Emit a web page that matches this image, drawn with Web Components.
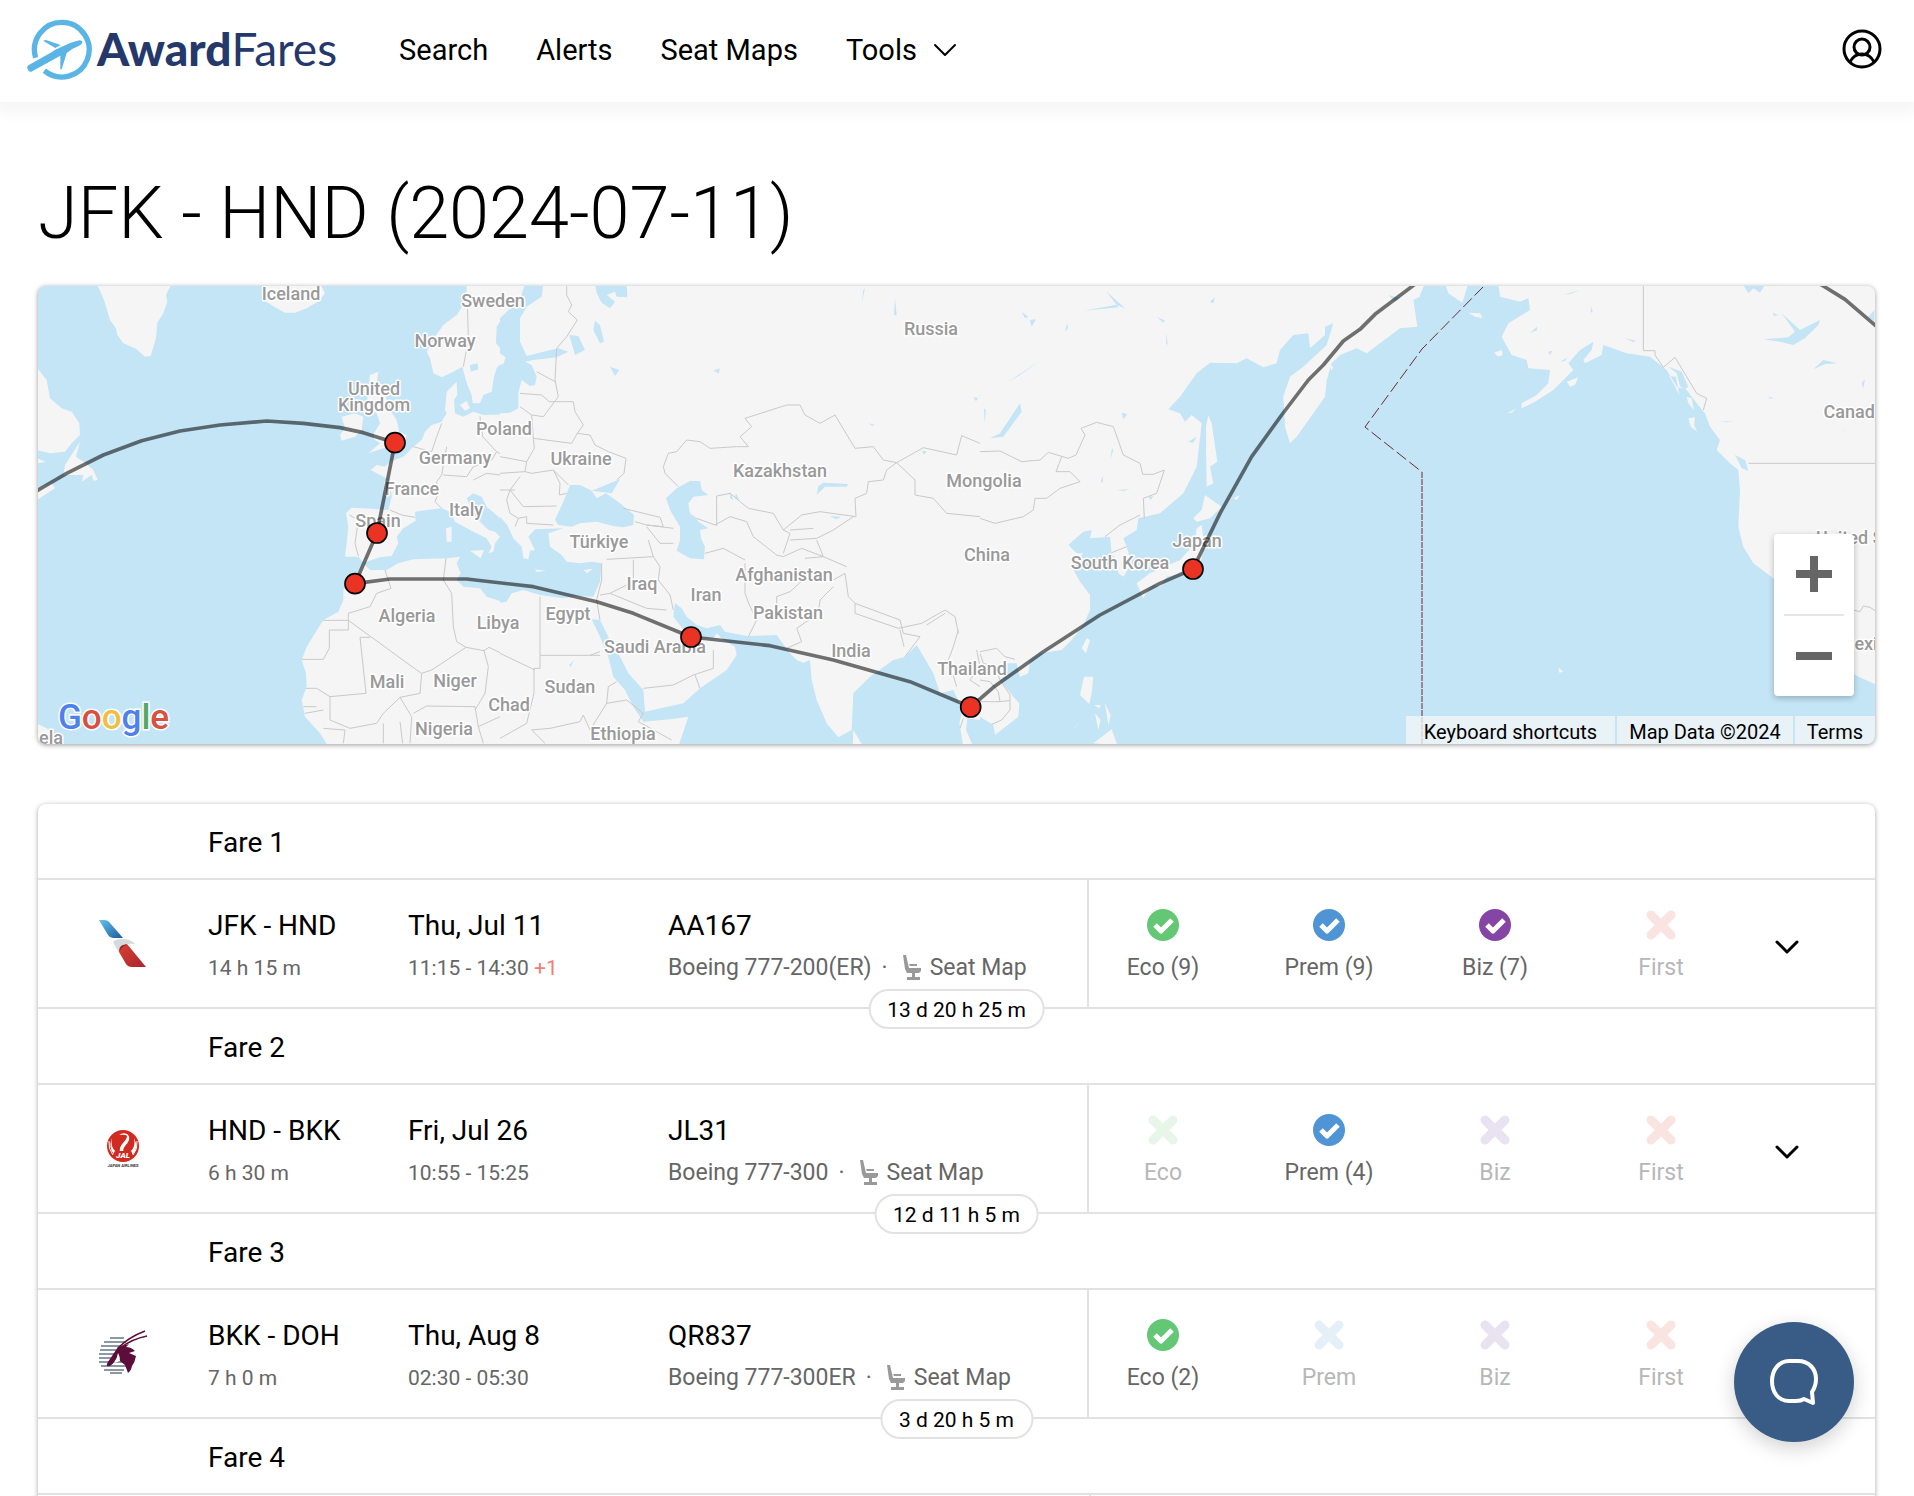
<!DOCTYPE html>
<html lang="en">
<head>
<meta charset="utf-8">
<meta name="viewport" content="width=device-width, initial-scale=1">
<title>AwardFares – JFK - HND</title>
<style>
  html, body { margin: 0; height: 100%; background: #fff; }
  body { font-family: Roboto, "Liberation Sans", sans-serif; color: #000; }
</style>
</head>
<body>
<af-app>
  <af-header slot="header"></af-header>
  <af-route-map></af-route-map>
  <af-fare-list>
    <af-fare name="Fare 1">
      <af-flight airline="aa" route="JFK - HND" duration="14 h 15 m" date="Thu, Jul 11" time="11:15 - 14:30" plus="+1" number="AA167" aircraft="Boeing 777-200(ER)" eco="9" prem="9" biz="7" layover="13 d 20 h 25 m"></af-flight>
    </af-fare>
    <af-fare name="Fare 2">
      <af-flight airline="jl" route="HND - BKK" duration="6 h 30 m" date="Fri, Jul 26" time="10:55 - 15:25" number="JL31" aircraft="Boeing 777-300" prem="4" layover="12 d 11 h 5 m"></af-flight>
    </af-fare>
    <af-fare name="Fare 3">
      <af-flight airline="qr" route="BKK - DOH" duration="7 h 0 m" date="Thu, Aug 8" time="02:30 - 05:30" number="QR837" aircraft="Boeing 777-300ER" eco="2" layover="3 d 20 h 5 m"></af-flight>
    </af-fare>
    <af-fare name="Fare 4"></af-fare>
  </af-fare-list>
  <af-chat slot="floating"></af-chat>
</af-app>

<script>
const define = (name, render) => customElements.define(name, class extends HTMLElement {
  connectedCallback() {
    if (this.shadowRoot) return;
    this.attachShadow({ mode: 'open' }).innerHTML = render(this);
  }
});

define('af-app', () => `
<style>
  :host { display: flex; flex-direction: column; height: 100vh; overflow-y: auto; scrollbar-width: none; }
  main { flex: none; display: flex; flex-direction: column; padding: 64px 39px 40px 38px; }
  h1 { margin: 0 0 24px; font-size: 72px; line-height: 96px; font-weight: 300; }
  .stack { display: flex; flex-direction: column; gap: 60px; }
</style>
<slot name="header"></slot>
<main><h1>JFK - HND (2024-07-11)</h1><div class="stack"><slot></slot></div></main>
<slot name="floating"></slot>`);

define('af-logo', () => `
<style>
  :host { display: block; }
  a { display: flex; align-items: center; gap: 4px; color: #24386b; text-decoration: none; font: 400 46px/60px Lato, sans-serif; }
  b { font-weight: 900; }
  svg { display: block; width: 67px; height: 63px; }
</style>
<a href="#home"><svg viewBox="14 19 201 189" aria-hidden="true">
  <g fill="none" stroke="#5ab5e6">
    <path d="M43 138A82 82 0 1 1 69 177" stroke-width="16"/>
  </g>
  <path fill="#5ab5e6" d="M18 170Q16 163 24 159L92 121 100 115 148 93 174 86Q184 86 183 94 176 103 154 111L136 124 122 170Q121 175 117 173L117 132 30 180Q22 182 18 170ZM65 87L74 85 118 100 102 109Z"/>
</svg><span><b>Award</b>Fares</span></a>`);

define('af-header', () => `
<style>
  :host { flex: none; display: block; background: #fff; box-shadow: 0 8px 12px 4px rgba(0,0,0,.035); }
  header { display: flex; align-items: center; height: 98px; padding: 0 32px 4px 26px; }
  nav { display: flex; align-items: center; gap: 48px; margin-left: 62px; padding-top: 2px; font-size: 29px; line-height: 40px; }
  nav a { color: #000; text-decoration: none; }
  button { display: flex; align-items: center; gap: 16px; border: 0; padding: 0; background: none; font: inherit; color: #000; }
  .user { margin-left: auto; }
  svg { display: block; fill: none; stroke: #000; }
</style>
<header>
  <af-logo></af-logo>
  <nav aria-label="Main">
    <a href="#search">Search</a><a href="#alerts">Alerts</a><a href="#seats">Seat Maps</a>
    <button type="button">Tools <svg width="24" height="14" viewBox="0 0 24 14" stroke-width="2" stroke-linecap="round" stroke-linejoin="round"><path d="M2 2l10 10L22 2"/></svg></button>
  </nav>
  <button class="user" type="button" aria-label="Account"><svg width="40" height="40" viewBox="0 0 40 40" stroke-width="3"><circle cx="20" cy="20" r="18"/><circle cx="20" cy="18" r="8"/><path d="M8 33Q12 25 20 25T32 33"/></svg></button>
</header>`);

/* Place names: text, centre x, centre y. */
const places = [['Iceland',291,294],['Sweden',493,301],['Norway',445,341],['United',374,389],['Kingdom',374,405],['Poland',504,429],['Germany',455,458],['France',412,489],['Italy',466,510],['Spain',378,521],['Ukraine',581,459],['Türkiye',599,542],['Kazakhstan',780,471],['Russia',931,329],['Mongolia',984,481],['China',987,555],['Iraq',642,584],['Iran',706,595],['Afghanistan',784,575],['Pakistan',788,613],['Egypt',568,614],['Saudi Arabia',655,647],['India',851,651],['Thailand',972,669],['Sudan',570,687],['Ethiopia',623,734],['Algeria',407,616],['Libya',498,623],['Mali',387,682],['Niger',455,681],['Chad',509,705],['Nigeria',444,729],['ela',51,738],['South Korea',1120,563],['Japan',1197,541],['Canada',1854,412],['United States',1870,538],['Mexico',1868,644]];
const stops = [[1095,488],[1041,759],[975,911],[1983,1071],[2822,1281],[3489,867]];

define('af-route-map', () => `
<style>
  :host { display: block; position: relative; height: 458px; border-radius: 8px; box-shadow: 0 1px 5px rgba(0,0,0,.4); overflow: hidden; background: #c3e5f6; }
  .map { display: block; width: 100%; height: 100%; }
  .land { fill: #f5f5f5; } .sea { fill: #c3e5f6; }
  .border { fill: none; stroke: #c9c9c9; stroke-width: 3; stroke-linejoin: round; }
  .names { font-size: 18px; font-weight: 500; text-anchor: middle; fill: #999; stroke: #fff; stroke-width: 3px; stroke-linejoin: round; paint-order: stroke; }
  .brand { font-size: 35px; font-weight: 500; stroke: #fff; stroke-width: 3px; paint-order: stroke; }
  .zoom { position: absolute; right: 21px; bottom: 48px; width: 80px; box-sizing: border-box; padding: 0 10px; background: #fff; border-radius: 4px; box-shadow: 0 2px 6px rgba(0,0,0,.25); }
  .zoom button { display: flex; width: 100%; height: 80px; align-items: center; justify-content: center; border: 0; padding: 0; background: none; }
  .zoom button + button { border-top: 2px solid #e6e6e6; height: 82px; }
  .legal { position: absolute; right: 0; bottom: 0; display: flex; gap: 2px; font-size: 20px; line-height: 24px; }
  .legal > * { border: 0; margin: 0; padding: 4px 12px 0; background: rgba(245,245,245,.75); font: inherit; color: #000; text-decoration: none; }
  .legal button { padding: 4px 18px 0; }
</style>
<svg class="map" viewBox="38 286 1837 458" preserveAspectRatio="xMidYMid slice" role="img" aria-label="Flight route map">
  <svg x="30" y="280" width="470" height="475" viewBox="0 0 1410 1425">
    <path class="land" d="M200 10H425L408 45 412 65 400 100 382 128 378 175 362 228 345 230 318 206 280 190 262 165 258 145 240 120 222 60ZM20 262L50 300 60 355 95 385 125 395 148 430 150 465 125 490 105 515 60 520 20 510ZM150 485L138 530 165 548 190 570 203 600 190 602 185 585 155 605 160 585 100 585 105 555ZM20 535L48 545 25 550ZM20 660L75 625 65 610 20 625ZM695 10L700 60 735 82 765 98 795 98 830 85 868 62 885 40 870 10ZM20 1330L60 1350 100 1400H20ZM1310 10V60L1280 105 1240 135 1215 170 1190 215 1200 235 1210 280 1235 292 1270 275 1297 260 1310 310 1325 345 1328 370 1350 370 1360 345 1385 335 1392 290 1400 265 1425 235 1420 215 1398 190 1400 140 1430 95V10ZM1020 285L1045 275 1040 310 1060 330 1080 390 1100 420 1108 455 1130 465 1125 490 1110 505 1060 505 1015 520 1050 490 1032 478 1032 460 1050 430 1040 400 1010 380 1015 330ZM935 410L975 400 1000 410 995 450 975 470 935 482 930 465 945 445ZM1280 305L1250 335 1245 390 1250 400 1235 425 1205 435 1185 455 1175 480 1150 500 1120 530 1080 545 1065 560 1040 555 1022 570 1060 590 1080 600 1085 650 1075 690 1000 685 965 683 948 700 955 740 950 790 945 830 985 830 1000 848 1050 832 1085 828 1105 790 1100 770 1120 745 1157 722 1155 695 1190 690 1235 685 1260 695 1275 725 1330 755 1370 775 1385 800 1375 820 1390 815 1395 790 1410 770 1395 755 1375 750 1345 720 1325 690 1310 655 1330 640 1355 650 1370 680 1410 715H1500V400L1360 405 1330 395 1300 410 1275 400 1272 360 1282 345ZM1290 375L1310 362 1320 385 1305 392ZM1248 745L1265 740V785L1250 785ZM1320 812L1362 810 1352 835ZM1000 850L1020 870 1070 870 1105 850 1150 838 1250 835 1290 830 1280 850 1292 880 1280 900 1300 920 1350 925 1370 950 1425 968 1445 945 1500 930V1400H895L870 1360 825 1310 815 1260 830 1220 828 1180 815 1140 830 1100 855 1060 880 1020 925 995 940 960 940 930 970 900Z"/>
    <path class="sea" d="M1320 255L1342 250 1345 268 1322 275Z"/>
    <path class="border" d="M1312 60L1315 180 1300 260M1250 500L1235 585 1220 605 1225 640 1215 665 1235 685M1235 430L1220 470 1205 515 1150 500M1350 410L1358 470 1400 515 1385 540 1330 560 1310 590 1240 585M1330 600L1370 580 1410 585M1400 515L1440 540M1080 690L1115 705 1155 712M958 705L985 720 975 790 985 828M1065 870L1083 925 1040 940 1020 980 955 1000V1050H898V1105L880 1138H815M880 1021H955L1160 1170 1175 1180 1205 1170 1308 1102 1362 1112 1377 1102 1410 1118M1248 835L1240 900 1265 940 1270 1040 1280 1085 1308 1102M1362 1112L1375 1160 1365 1240 1335 1290M1020 1072H990L1008 1240 900 1250 860 1225 828 1225M1175 1180L1170 1240 1110 1252 1060 1300 1040 1330 960 1345 900 1320 900 1250M1110 1252L1145 1310 1140 1390M1150 1300L1190 1278 1335 1280 1345 1340 1360 1390M1060 1330V1390M1110 1325L1118 1390M820 1280H860M825 1300L880 1290M880 1345L945 1350 940 1390M1345 1340L1410 1310"/>
  </svg>
  <svg x="500" y="280" width="480" height="475" viewBox="0 0 1440 1425">
    <path class="land" d="M0 0H1440V1425H0Z"/>
    <path class="sea" d="M75 10H130L125 50 80 80 60 115 60 185 80 228 130 215 175 205 205 215 170 232 100 240 75 245 95 255 110 290 105 315 90 318 65 300 55 340 55 385 30 398 0 400V115L20 95 60 60ZM285 10H380L382 52 350 50 345 35 320 45 345 65 330 85 305 68 290 40ZM285 122L300 135 312 185 300 190 280 150ZM208 165L235 168 255 210 225 225ZM330 260L358 270 345 288ZM210 615H240L275 632 290 655 318 640 360 670 402 705 400 735 370 742 340 738 290 725 240 730 215 740 175 735 165 720 190 665ZM275 632L360 598 335 640 300 635ZM570 603H600L605 630 625 645 580 650 565 670 570 700 590 715 595 725 625 745 600 750 603 775 615 800 612 838 570 835 530 812 540 780 540 740 510 690 498 655 530 625ZM0 710L22 735 40 775 65 800 70 835 85 838 90 812 105 810 85 770 105 748 190 745 145 760 150 800 185 825 200 845 240 850 275 845 305 850 300 905 280 950 230 948 190 955 120 945 70 930 35 940 20 965 0 968ZM525 970L545 985 560 1010 590 1035 620 1045 660 1035 675 1055 740 1068 830 1065 870 1120 890 1140 910 1148 930 1140 935 1200 950 1260 980 1330 1015 1372 1055 1350 1060 1240 1110 1190 1180 1140 1215 1130 1250 1095 1265 1120 1300 1180 1320 1240 1360 1230 1388 1290 1378 1330 1390 1400H535L565 1310 510 1318 430 1325 400 1280 375 1230 340 1190 325 1130 300 1070 275 1018 300 1020 330 1080 360 1130 385 1180 430 1230 435 1295 550 1270 600 1225 680 1170 710 1125 705 1100 670 1080 650 1060 640 1075 590 1075 555 1055 520 1010ZM1402 1315L1440 1320V1400H1420L1398 1350ZM950 645L955 618 970 608 1045 612 1040 620 975 620 955 640ZM690 635L700 660 690 655ZM708 640L718 660 705 655ZM1090 30L1095 25 1085 70ZM1185 55L1190 105 1182 105ZM208 1155L222 1140 212 1162ZM1420 352L1434 354 1428 364ZM1265 512L1280 514 1272 524ZM990 708L1024 710 1008 718ZM640 272L660 265 656 280ZM1104 430L1124 434 1118 438Z"/>
    <path class="land" d="M1060 1350L1090 1400H1058ZM105 868L138 872 110 876ZM0 220L16 232 12 250 0 256ZM250 870L278 866 262 880Z"/>
    <path class="border" d="M200 15V45L215 75 205 95 232 120 200 170 170 205 165 300 175 350 130 410 95 405 60 380M110 275L165 305M60 340L125 345 148 365 220 365 225 395 250 435 232 460 215 490 100 475 95 405M100 475L103 505 80 545 0 530M232 460L270 465 285 495 325 515 378 535 372 580 350 600M80 545L75 575 95 580 160 570 205 615M0 580L75 575M60 590L30 630 70 680 170 678M160 570L180 610 178 645 200 640M0 630H45M30 630L20 660 30 700 55 715 80 710V730L160 735M55 715L45 740M370 685L480 712 490 740 440 735 405 725M440 740L480 790 520 790M440 735L520 745M445 780L460 830 320 838M460 830L480 860 475 900 510 945 520 990M400 840V905L330 940 300 945M305 850V900L290 960 300 1020M330 940L440 985 500 990M120 950V1126H300M120 1126V1165H102V1240L80 1330 0 1375M0 1120L105 1170M270 1126L300 1115M350 1205L325 1220 320 1270 380 1260 430 1300M320 1270L270 1350 250 1305 240 1325 150 1345 95 1350 135 1390M430 1300L415 1325 515 1380M430 1225L520 1215 580 1185 640 1165V1110M585 1185L600 1225M535 620L495 580 490 560 505 520 530 515 560 480 600 485 630 505 710 500 745 500 720 470 755 440 735 415 860 375H900L915 405 960 430 1005 405 1050 480 1065 505 1120 500 1150 540 1190 548 1160 570 1150 600 1105 605 1100 640 1065 655 1068 710 960 695 905 705 850 750 820 700 745 685 690 640 650 648V738M590 715L645 735M645 735L690 710 740 725 760 770 830 825M615 820L670 805 735 840M735 850V940L748 975 770 1020 745 1070M830 825L850 830 905 805 970 830 1040 860M850 750L870 760 850 820M870 750L940 745M1060 710L1000 750 950 775 870 780M950 780L970 830 915 835M1190 548L1270 503 1370 525 1385 467 1440 490M1190 548L1245 600V645L1300 655 1340 700 1440 710M1000 920L960 960 955 1000 890 1045 905 1085 860 1105M830 980V950L870 935 920 890M1000 900L1035 880 1045 950 1065 970 1065 1000 1195 1045 1265 1030 1335 990 1365 1010 1375 1060M1065 970L1200 1020M1200 1020L1210 1060 1260 1070 1215 1130M1200 1050L1212 1100M1280 1035L1335 1000M1375 1050L1360 1100 1345 1140 1370 1220M1430 1110L1440 1160 1410 1200 1440 1220M1380 1345L1390 1315"/>
  </svg>
  <svg x="980" y="280" width="440" height="475" viewBox="0 0 1320 1425">
    <path class="land" d="M0 0H1320V1425H0Z"/>
    <path class="sea" d="M1320 50L1300 60 1312 140 1260 145 1160 220 1130 205 1080 225 1055 250 1040 300 1035 350 1000 400 950 470 930 490 915 440 910 350 930 290 970 260 1040 195 1060 130 1035 140 1035 165 990 205 985 160 940 165 900 210 890 250 850 262 800 235 770 250 690 248 650 280 600 350 565 388 600 400 615 425 635 405 665 430 650 560 610 640 540 700 475 715 470 750 430 775 440 800 455 850 430 890 415 880 410 840 395 820 390 770 330 775 335 750 310 755 265 795 290 820 310 820 275 860 300 905 330 945V990L310 1035 275 1080 245 1110 180 1120 150 1140 145 1180 120 1190 110 1150 80 1150 70 1190 60 1200 100 1250 118 1270 115 1310 45 1365 40 1335 0 1310V1400H1320ZM120 370L125 395 70 470 30 475 60 460 100 400ZM380 35L435 85 410 75ZM312 92L410 74 415 82ZM425 398L442 402 430 418ZM125 95L145 110 135 115ZM150 120L168 118 155 140ZM255 155L262 130 264 145ZM530 110L555 122 550 128ZM690 65L705 52 700 70ZM390 540L396 505 400 510ZM410 630L450 628 430 633ZM12 385L18 390 14 430ZM625 485L650 470 640 488ZM505 650L520 648 512 660ZM85 305L175 245 120 285ZM560 160L563 195 558 190ZM1225 45L1260 55 1245 65ZM362 605L370 585 368 608Z"/>
    <path class="land" d="M685 405L695 430 712 545 690 560 700 610 680 620 678 500 678 440ZM675 645L725 680 690 715 650 725 640 715 665 690ZM650 745L665 735 672 790 662 850 610 880 560 890 540 920 520 915 500 935 490 955 470 910 510 880 600 840 645 790ZM320 1075L330 1080 318 1120 305 1105ZM312 1190H340L335 1240 328 1272 300 1245ZM340 1390L395 1348 412 1395ZM275 1355L298 1325 292 1335ZM342 1275L362 1275 358 1285ZM375 1270L392 1305 385 1335ZM345 1300L362 1320 355 1350ZM1050 255L1060 260 1055 272ZM760 655L780 645 770 660Z"/>
    <path class="border" d="M0 515L60 513 125 545 180 540 205 517 265 535 288 525 315 465 303 445 350 427 400 440 430 525 480 550 488 583H520L553 570 530 640 490 655 493 715M245 530L228 575 270 575 300 605 240 625 200 655 165 655 160 690 130 710 45 730 0 715M480 705L420 735 375 770M440 800L395 818M0 1115L50 1105 75 1130 105 1138M0 1120L10 1150 45 1160 60 1200 90 1245V1290L65 1320 35 1333M0 1200L30 1205 55 1235 60 1265 0 1265M55 1265L90 1262"/>
  </svg>
  <svg x="1420" y="280" width="494" height="475" viewBox="0 0 1482 1425">
    <path class="land" d="M0 10H15L0 45ZM75 10L85 40 127 68 145 10ZM235 10L240 50 300 65 325 55 330 90 265 130 245 170 275 225 320 240 325 265 390 270 385 310 350 345 305 370 305 385 345 365 400 330 430 300 460 270 445 250 480 210 520 185 515 210 490 240 495 250 545 225 550 195 620 220 690 230 740 270 770 320 800 330 830 370 855 400 870 440 900 480 890 510 930 550 955 570 960 630 955 740 970 800 1000 850 1060 895 1100 950 1200 1080 1305 1185 1370 1215H1482V10ZM145 98L180 100 188 115 165 110ZM222 218L245 210 248 225 235 230ZM440 305L475 292 465 315 450 320ZM262 400L290 385 275 398ZM748 288L768 290 778 345ZM800 350L815 355 822 390 805 370ZM805 415L825 412 822 435 832 455 812 440ZM416 1163L430 1175 418 1178Z"/>
    <path class="sea" d="M745 260L770 280 780 318 792 330 805 320 785 275ZM945 525L975 540 985 572 965 565ZM970 15H1035L1020 38 1000 25 985 40ZM1085 100L1140 150 1200 120 1195 135 1155 175 1120 195 1080 185 1030 178 1105 172 1125 155ZM1180 268L1210 240 1252 250 1215 252ZM1325 310L1335 298 1330 325ZM1045 350L1062 354 1050 356ZM900 425L940 423 920 427ZM430 44L480 30 450 42ZM330 160L350 140 352 150ZM385 215L398 212 390 225ZM615 175L648 182 640 186ZM513 80L518 95 512 98ZM1058 98L1075 105 1062 108ZM1262 460L1278 442 1270 452ZM420 245L442 233 435 243ZM1345 110L1363 90V125Z"/>
    <path class="border" d="M670 15V212H705V225L730 262 765 232 830 340 860 355 850 390M985 550H1482M1300 990L1320 995 1330 978 1350 982 1370 995"/>
  </svg>
  <g fill="none" stroke="#6b2b30" stroke-width="1"><path d="M1483 287L1422 349 1365 427 1422 472" stroke-dasharray="12 4"/><path d="M1422 472V744" stroke-dasharray="6 1"/></g>
  <g class="names">${places.map(([t, x, y]) => `<text x="${x}" y="${y + 6}">${t}</text>`).join('')}</g>
  <g transform="translate(30 280) scale(.333333)">
    <path fill="none" stroke="#000" stroke-opacity=".55" stroke-width="11" stroke-linejoin="round" d="M0 643L25 630 110 580 220 525 335 482 450 453 570 435 710 423 820 430 930 443 1000 458 1095 488 1041 759 975 911 1080 897H1310L1510 920 1700 965 1810 1000 1983 1071 2220 1097 2410 1140 2640 1205 2822 1281 2890 1222 3040 1115 3210 1005 3390 910 3489 867 3570 700 3665 530 3755 405 3835 300 3880 255 3940 183 3990 148 4035 103 4165 5M5355 5L5375 15 5445 58 5550 148"/>
    <g fill="#ea3323" stroke="#000" stroke-width="5">${stops.map(([x, y]) => `<circle cx="${x}" cy="${y}" r="30"/>`).join('')}</g>
  </g>
  <text class="brand" x="58" y="729"><tspan fill="#4e80ee">G</tspan><tspan fill="#d8503f">o</tspan><tspan fill="#f0bf42">o</tspan><tspan fill="#4e80ee">g</tspan><tspan fill="#55a863">l</tspan><tspan fill="#d8503f">e</tspan></text>
</svg>
<div class="zoom">
  <button type="button" aria-label="Zoom in"><svg width="36" height="36"><path fill="#666" d="M14 0h8v14h14v8H22v14h-8V22H0v-8h14z"/></svg></button>
  <button type="button" aria-label="Zoom out"><svg width="36" height="8"><path fill="#666" d="M0 0h36v8H0z"/></svg></button>
</div>
<div class="legal"><button type="button">Keyboard shortcuts</button><span>Map Data ©2024</span><a href="#terms">Terms</a></div>`);

define('af-fare-list', () => `
<style>:host { display: block; background: #fff; border-radius: 8px; box-shadow: 0 1px 5px rgba(0,0,0,.35); }</style><slot></slot>`);

define('af-fare', el => `
<style>
  :host { display: block; }
  h2 { margin: 0; padding: 18px 0 14px 170px; font-size: 28px; line-height: 42px; font-weight: 400; border-bottom: 2px solid #e2e2e2; }
  .pending { height: 127px; display: grid; grid-template-columns: 1051fr 786fr; }
  .pending i { grid-column: 2; border-left: 2px solid #e2e2e2; }
</style>
<h2>${el.getAttribute('name')}</h2><slot><div class="pending"><i></i></div></slot>`);

const logos = {
  aa: `<defs><linearGradient id="b" x2="1" y2="1"><stop stop-color="#5fc4ee"/><stop offset="1" stop-color="#1c5a9c"/></linearGradient><linearGradient id="r" x2="1" y2="1"><stop stop-color="#d8412f"/><stop offset="1" stop-color="#a92632"/></linearGradient></defs>
    <path fill="url(#b)" d="M1 1h5q4 0 6 3l13 15H15q-3 0-5-3z"/><path fill="#d5dadd" d="M15 23q2-3 9-3 9 0 13 5-8-1-12 2-4 3-4 7z"/><path fill="url(#r)" d="M29 25l19 23H34q-4 0-6-3l-7-12q1-6 8-8z"/><path fill="#9d2430" d="M29 25q-5 3-8 8 0-6 4-7z"/>`,
  jl: `<circle cx="25" cy="22" r="16" fill="#d12a20"/><path fill="#fff" d="M21 11q4-3 8-1 3 2 2 6-1 3-4 6-3 4-1 6h6q6-5 4-14 5 10-1 16-9 6-19 0-6-6-2-16-2 9 4 14h4q-1-5 3-9 4-4 4-7-1-2-8-1z"/>
    <path fill="none" stroke="#fff" d="M11 17q-1 8 4 14M39 17q1 8-4 14"/><rect x="16" y="27" width="18" height="7" rx="2" fill="#d12a20"/>
    <text x="25" y="34" fill="#fff" font-size="8" font-weight="900" font-style="italic" text-anchor="middle">JAL</text><text x="25" y="43" fill="#333" font-size="4" font-weight="700" text-anchor="middle">JAPAN AIRLINES</text>`,
  qr: `<g stroke="#8a99a3" stroke-width="2"><path d="M12 9h14M6 13h22M3 17h20M2 21h18M1 25h16M1 29h12M1 33h26M3 37h26M6 41h20M12 44h12"/></g>
    <path fill="#5c0d39" d="M20 18l-8 12q-4 5-3 7 4 1 7-4l5-7 1 6 5 4 3 8q3-2 4-7 3-4 4-10l-7-3 6-2q-4-4-9-4l3-3z"/><path fill="none" stroke="#5c0d39" stroke-width="1.5" d="M20 19Q31 8 47 2M22 19Q34 10 49 7"/><path fill="#fff" d="M20 24q3 5 0 9l-4 1q3-4 4-10z"/>`
};

define('af-cabin', el => {
  const seats = el.getAttribute('seats');
  const kind = el.getAttribute('kind');
  const [name, on, off] = { eco: ['Eco', '#63c776', '#e7f6e9'], prem: ['Prem', '#4f94d5', '#e5eff8'], biz: ['Biz', '#8545a5', '#e9e2f0'], first: ['First', '#dc5040', '#f9e4e1'] }[kind];
  const icon = seats
    ? `<circle cx="16" cy="16" r="16" fill="${on}"/><path d="M8 16l6 6L25 11" fill="none" stroke="#fff" stroke-width="5" stroke-linejoin="round"/>`
    : `<path d="M6 6L26 26M26 6L6 26" stroke="${off}" stroke-width="9" stroke-linecap="round"/>`;
  return `
<style>
  :host { display: flex; flex-direction: column; align-items: center; font-size: 23px; line-height: 42px; color: ${seats ? '#666' : '#b7b7b7'}; }
  div { height: 42px; display: flex; align-items: flex-start; padding-top: 4px; box-sizing: border-box; }
  svg { display: block; width: 32px; height: 32px; }
</style>
<div><svg viewBox="0 0 32 32" aria-hidden="true">${icon}</svg></div><span>${name}${seats ? ` (${seats})` : ''}</span>`;
});

define('af-flight', el => {
  const a = n => el.getAttribute(n) || '';
  return `
<style>
  :host { display: block; position: relative; border-bottom: 2px solid #e2e2e2; font-size: 21px; line-height: 42px; color: #666; }
  .row { display: grid; grid-template-columns: 170fr 200fr 260fr 421fr 786fr; }
  .row > div { padding: 25px 0 18px; white-space: nowrap; min-width: 0; }
  .row > .logo { display: flex; align-items: center; justify-content: center; padding: 0; }
  .title { font-size: 28px; color: #000; }
  .plus { color: #f07f76; }
  .craft { display: flex; align-items: center; font-size: 23px; }
  .dot { padding: 0 10px; }
  a { display: flex; align-items: center; gap: 8px; margin-left: 4px; color: inherit; text-decoration: none; }
  .row > .cabins { display: grid; grid-template-columns: repeat(4, 148fr) 104fr; column-gap: 18px; padding-right: 18px; border-left: 2px solid #e2e2e2; margin-left: -2px; }
  .cabins button { display: flex; align-items: center; justify-content: center; border: 0; padding: 0 36px 0 0; background: none; }
  .layover { position: absolute; left: 50%; bottom: -22px; transform: translateX(-50%); box-sizing: border-box; height: 40px; padding: 0 17px; border: 2px solid #e2e2e2; border-radius: 20px; background: #fff; line-height: 38px; color: #000; white-space: nowrap; z-index: 1; }
  svg { display: block; flex: none; }
</style>
<div class="row">
  <div class="logo"><svg width="50" height="50" viewBox="0 0 50 50" aria-hidden="true">${logos[a('airline')]}</svg></div>
  <div><div class="title">${a('route')}</div>${a('duration')}</div>
  <div><div class="title">${a('date')}</div>${a('time')} <span class="plus">${a('plus')}</span></div>
  <div><div class="title">${a('number')}</div><div class="craft">${a('aircraft')}<span class="dot">·</span><a href="#seat-map"><svg width="20" height="26" viewBox="0 0 20 26" aria-hidden="true"><g fill="#999"><path d="M1 0H4L7 13H19V16L17 18H5L3 14Z"/><path d="M7 9H15V11H8Z"/><path d="M10 18H13V22H10Z"/><path d="M5 22H18V25H5Z"/></g></svg>Seat Map</a></div></div>
  <div class="cabins">
    ${['eco', 'prem', 'biz', 'first'].map(k => `<af-cabin kind="${k}"${a(k) ? ` seats="${a(k)}"` : ''}></af-cabin>`).join('')}
    <button type="button" aria-label="Show details"><svg width="26" height="16" viewBox="0 0 26 16" fill="none" stroke="#000" stroke-width="3" stroke-linecap="round" stroke-linejoin="round"><path d="M3 3l10 10L23 3"/></svg></button>
  </div>
</div>
<div class="layover">${a('layover')}</div>`;
});

define('af-chat', () => `
<style>
  :host { position: fixed; right: 60px; bottom: 54px; z-index: 2; display: block; }
  button { display: flex; align-items: center; justify-content: center; width: 120px; height: 120px; border: 0; padding: 0; border-radius: 50%; background: #395c87; box-shadow: 0 6px 20px rgba(0,0,0,.18); }
</style>
<button type="button" aria-label="Open chat"><svg width="50" height="48" viewBox="0 0 50 48" fill="none" stroke="#fff" stroke-width="4" stroke-linejoin="round"><path d="M20 3H29C40 3 47 11 47 21C47 28 45 31 43 34L44 45L35 41C32 43 30 43 27 43H20C9 43 3 34 3 23S10 3 20 3Z"/></svg></button>`);
</script>
</body>
</html>
